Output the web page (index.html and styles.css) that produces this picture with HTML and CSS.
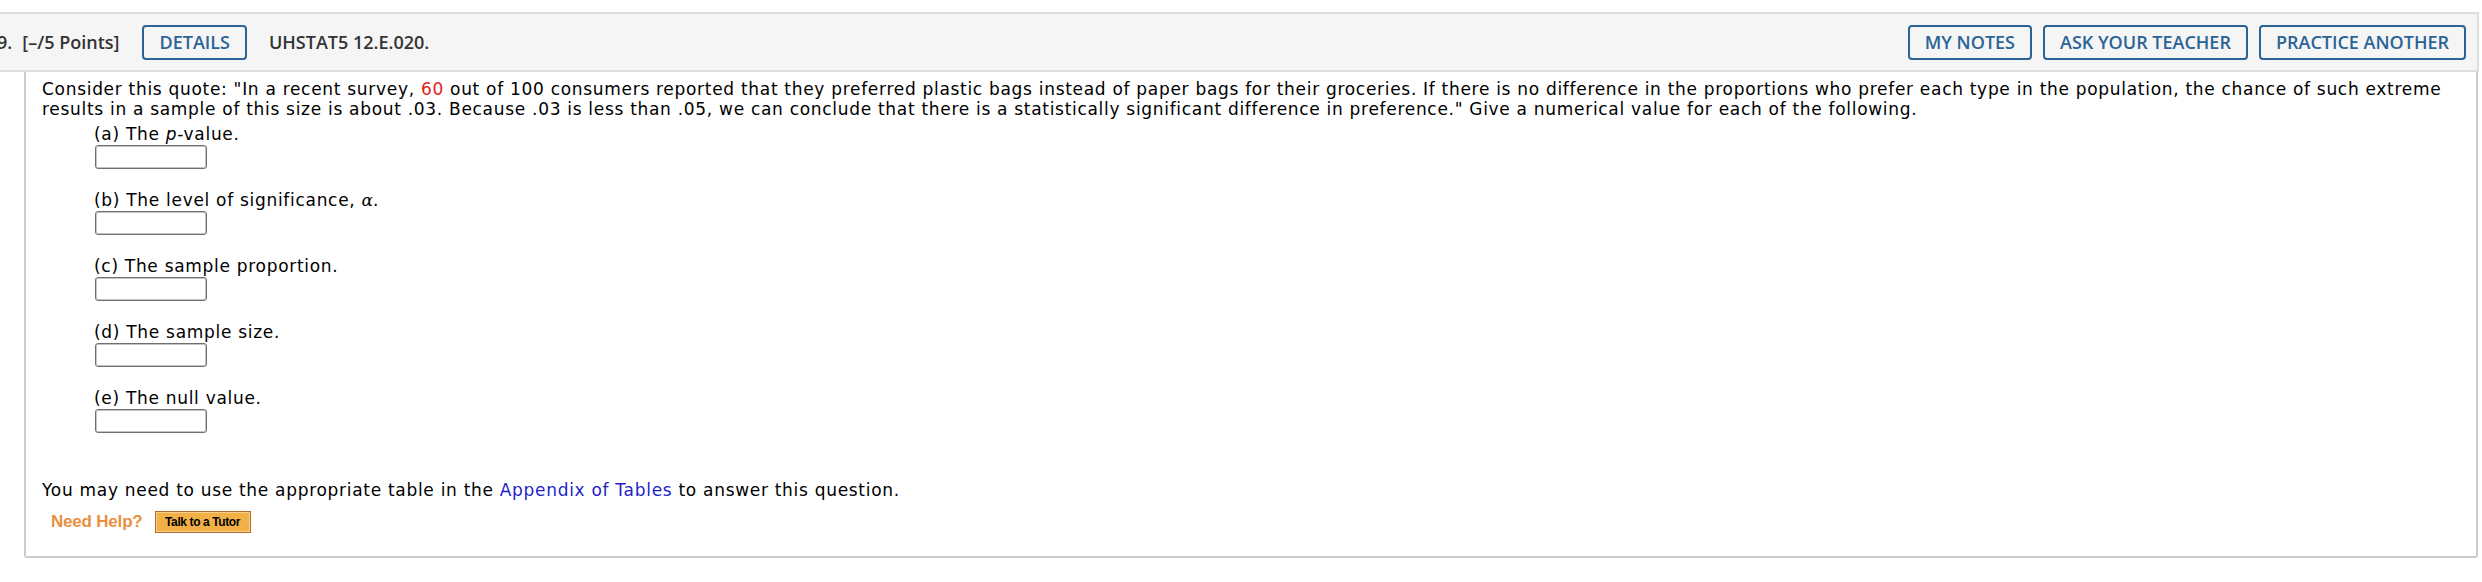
FILE: index.html
```html
<!DOCTYPE html>
<html>
<head>
<meta charset="utf-8">
<link rel="stylesheet" href="styles.css">
<title>Question 9</title>
</head>
<body>
<div class="question">
  <div class="qheader">
    <div class="qleft">
      <span class="qnum">9.</span>
      <span class="qpoints">[–/5 Points]</span>
      <button class="hbtn btn-details">DETAILS</button>
      <span class="qcode">UHSTAT5 12.E.020.</span>
    </div>
    <div class="qright">
      <button class="hbtn">MY NOTES</button>
      <button class="hbtn">ASK YOUR TEACHER</button>
      <button class="hbtn">PRACTICE ANOTHER</button>
    </div>
  </div>
  <div class="qbody">
    <p class="stem">Consider this quote: "In a recent survey, <span class="red">60</span> out of 100 consumers reported that they preferred plastic bags instead of paper bags for their groceries. If there is no difference in the proportions who prefer each type in the population, the chance of such extreme results in a sample of this size is about .03. Because .03 is less than .05, we can conclude that there is a statistically significant difference in preference." Give a numerical value for each of the following.</p>
    <div class="parts">
      <div class="part">
        <div class="plabel">(a) The <i>p</i>-value.</div>
        <input class="ans" type="text">
      </div>
      <div class="part">
        <div class="plabel">(b) The level of significance, <i class="math">α</i>.</div>
        <input class="ans" type="text">
      </div>
      <div class="part">
        <div class="plabel">(c) The sample proportion.</div>
        <input class="ans" type="text">
      </div>
      <div class="part">
        <div class="plabel">(d) The sample size.</div>
        <input class="ans" type="text">
      </div>
      <div class="part">
        <div class="plabel">(e) The null value.</div>
        <input class="ans" type="text">
      </div>
    </div>
    <p class="note">You may need to use the appropriate table in the <a class="link" href="#">Appendix of Tables</a> to answer this question.</p>
    <div class="help">
      <span class="needhelp">Need Help?</span>
      <button class="tutor">Talk to a Tutor</button>
    </div>
  </div>
</div>
</body>
</html>
```
FILE: styles.css
```css
html, body {
  margin: 0;
  padding: 0;
  background: #ffffff;
}

.question {
  margin: 12px 3px 0 -17px;
}

.qheader {
  display: flex;
  align-items: center;
  justify-content: space-between;
  height: 56px;
  padding: 0 11px 0 12px;
  background: #f5f5f5;
  border: 2px solid #dddddd;
  font-family: "Open Sans", "DejaVu Sans", sans-serif;
  font-size: 18px;
  font-weight: 600;
  color: #333333;
}

.qleft {
  display: flex;
  align-items: center;
}

.qpoints {
  margin-left: 10px;
}

.btn-details {
  margin-left: 23px;
}

.qcode {
  margin-left: 22px;
}

.qright {
  display: flex;
  align-items: center;
  gap: 11px;
}

.hbtn {
  height: 35px;
  padding: 0 15px;
  border: 2px solid #2b6396;
  border-radius: 4px;
  background: transparent;
  font-family: "Open Sans", "DejaVu Sans", sans-serif;
  font-size: 18px;
  font-weight: 600;
  color: #2b6396;
  line-height: 31px;
}

.qbody {
  margin: 0 1px 0 41px;
  padding: 7px 16px 23px 16px;
  border: 2px solid #cccccc;
  border-top: none;
  border-radius: 0 0 3px 3px;
  font-family: "DejaVu Sans", Verdana, sans-serif;
  font-size: 17px;
  letter-spacing: 0.7px;
  line-height: 20px;
  color: #000000;
}

.stem {
  margin: 0;
}

.red {
  color: #e3221c;
}

.parts {
  display: flex;
  flex-direction: column;
  gap: 21px;
  margin: 5px 0 0 52px;
}

.plabel {
  line-height: 20px;
}

.math {
  font-family: "DejaVu Serif", "Liberation Serif", serif;
  letter-spacing: 0;
}

.ans {
  display: block;
  box-sizing: border-box;
  width: 112px;
  height: 24px;
  margin: 1px 0 0 1px;
  padding: 0;
  border: 1px solid #6f6f6f;
  border-radius: 3px;
  box-shadow: inset 0 0 0 1px #c4c4c4;
  background: #ffffff;
}

.note {
  margin: 47px 0 0 0;
}

.link {
  color: #1f1fc8;
  text-decoration: none;
}

.help {
  display: flex;
  align-items: center;
  margin: 11px 0 0 9px;
  letter-spacing: 0;
}

.needhelp {
  font-family: "Liberation Sans", Arial, sans-serif;
  font-size: 17px;
  font-weight: bold;
  color: #e8903f;
  letter-spacing: -0.2px;
}

.tutor {
  box-sizing: border-box;
  width: 96px;
  height: 22px;
  margin-left: 12px;
  padding: 0;
  border: 1px solid #b06c28;
  box-shadow: inset 0 0 0 1px #f9d08a;
  background: #f3b047;
  font-family: "Liberation Sans", Arial, sans-serif;
  font-size: 12px;
  font-weight: bold;
  letter-spacing: -0.4px;
  color: #000000;
}
```
